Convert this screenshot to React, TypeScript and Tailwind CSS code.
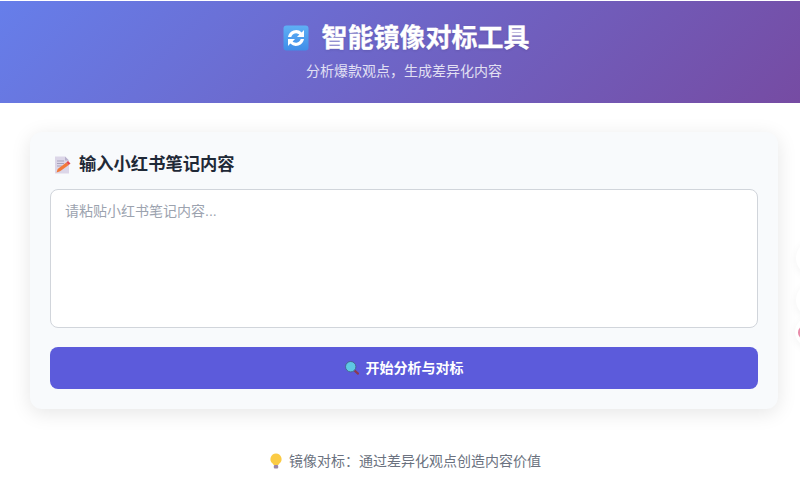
const font = { fontFamily: '"Liberation Sans", "Noto Sans CJK SC", sans-serif' };

function SyncIcon() {
  return (
    <svg width="26" height="26" viewBox="0 0 26 26">
      <defs>
        <linearGradient id="sync" x1="0" y1="0" x2="0" y2="1">
          <stop offset="0" stopColor="#5fb0f5" />
          <stop offset="1" stopColor="#3f8de8" />
        </linearGradient>
      </defs>
      <rect x="0.5" y="0.5" width="25" height="25" rx="3" fill="url(#sync)" />
      <path d="M5 12a8.2 8.2 0 0 1 13.7-4.6L21 5v7h-7l2.4-2.4A5 5 0 0 0 8.3 12z" fill="#fff" />
      <path d="M21 14a8.2 8.2 0 0 1-13.7 4.6L5 21v-7h7l-2.4 2.4a5 5 0 0 0 8.1-2.4z" fill="#fff" />
    </svg>
  );
}

function MemoIcon() {
  return (
    <svg width="18" height="18" viewBox="0 0 18 18">
      <path d="M1 0.5h10l4 4v13H1z" fill="#dcd6e8" />
      <path d="M11 0.5l4 4h-4z" fill="#b8b1cc" />
      <path d="M3 5h7M3 7.5h7M3 10h5" stroke="#a9a3bd" strokeWidth="1" />
      <path d="M2.5 16.5l1.2-3.6 8.6-6.4 2.4 2.4-8.6 6.4z" fill="#f2793a" />
      <path d="M12.3 6.5l1.7-1.5 2.5 2.5-1.8 1.4z" fill="#e5484d" />
    </svg>
  );
}

function SearchIcon() {
  return (
    <svg width="14" height="14" viewBox="0 0 14 14">
      <path d="M9 9l4 3.6" stroke="#8b3a50" strokeWidth="2.2" strokeLinecap="round" />
      <circle cx="5.7" cy="5.7" r="5.2" fill="#5ec8e4" stroke="#46628a" strokeWidth="0.9" />
    </svg>
  );
}

function BulbIcon() {
  return (
    <svg width="14" height="16" viewBox="0 0 14 16">
      <path d="M7 0.5a5.6 5.6 0 0 0-3.4 10c.6.6.9 1.1 1 1.5h4.8c.1-.4.4-.9 1-1.5A5.6 5.6 0 0 0 7 .5z" fill="#fbcb45" />
      <rect x="4.8" y="12" width="4.4" height="3.5" rx="1" fill="#9a86a8" />
    </svg>
  );
}

export default function App() {
  return (
    <div style={font} className="relative h-[497px] w-[800px] overflow-hidden bg-white">
      <div className="w-[808px] pt-[1px]">
        <header className="flex h-[102px] flex-col items-center bg-[linear-gradient(135deg,#667eea_0%,#764ba2_100%)] pt-[18px] text-white">
          <h1 className="flex h-[38px] items-center text-[26px] font-bold leading-[38px] [-webkit-text-stroke:0.3px_white] [text-shadow:0_1px_3px_rgba(0,0,0,0.12)]">
            <span className="ml-[5px] mr-[12px] flex"><SyncIcon /></span>
            智能镜像对标工具
          </h1>
          <p className="mt-[4px] text-sm leading-[20px] opacity-80">分析爆款观点，生成差异化内容</p>
        </header>

        <main className="px-[30px] pt-[29px]">
          <section className="h-[277px] rounded-[12px] bg-[#f8fafc] px-[20px] pt-[20px] shadow-[0_4px_20px_rgba(0,0,0,0.1)]">
            <h2 className="flex h-[25px] items-center pl-[4px] text-[17.3px] font-semibold leading-[25px] text-[#1f2937]">
              <span className="mr-[7px] flex"><MemoIcon /></span>
              输入小红书笔记内容
            </h2>
            <textarea
              readOnly
              placeholder="请粘贴小红书笔记内容..."
              className="mt-[12px] block h-[139px] w-full resize-none rounded-[8px] border border-[#d1d5db] bg-white px-[14px] py-[11px] text-sm leading-[20px] placeholder:text-[#9ca3af] outline-none"
            />
            <button className="mt-[19px] flex h-[42px] w-full items-center justify-center rounded-[8px] bg-[#5c5bdb] text-sm font-semibold text-white">
              <span className="mr-[7px] flex"><SearchIcon /></span>
              开始分析与对标
            </button>
          </section>
        </main>

        <footer className="mt-[42px] flex items-center justify-center text-sm leading-[20px] text-[#6b7280]">
          <span className="ml-[2px] mr-[6px] flex"><BulbIcon /></span>
          镜像对标：通过差异化观点创造内容价值
        </footer>
      </div>

      <div className="absolute left-[796px] top-[240px] h-[36px] w-[36px] rounded-full bg-white shadow-[0_2px_8px_rgba(0,0,0,0.05)]" />
      <div className="absolute left-[796px] top-[282px] h-[36px] w-[36px] rounded-full bg-white shadow-[0_2px_8px_rgba(0,0,0,0.05)]" />
      <div className="absolute left-[795px] top-[317px] flex h-[30px] w-[30px] items-center rounded-full bg-white shadow-[0_2px_8px_rgba(0,0,0,0.05)]">
        <div className="ml-[3px] h-[15px] w-[15px] rounded-full bg-[#e88aa8]" />
      </div>
    </div>
  );
}
